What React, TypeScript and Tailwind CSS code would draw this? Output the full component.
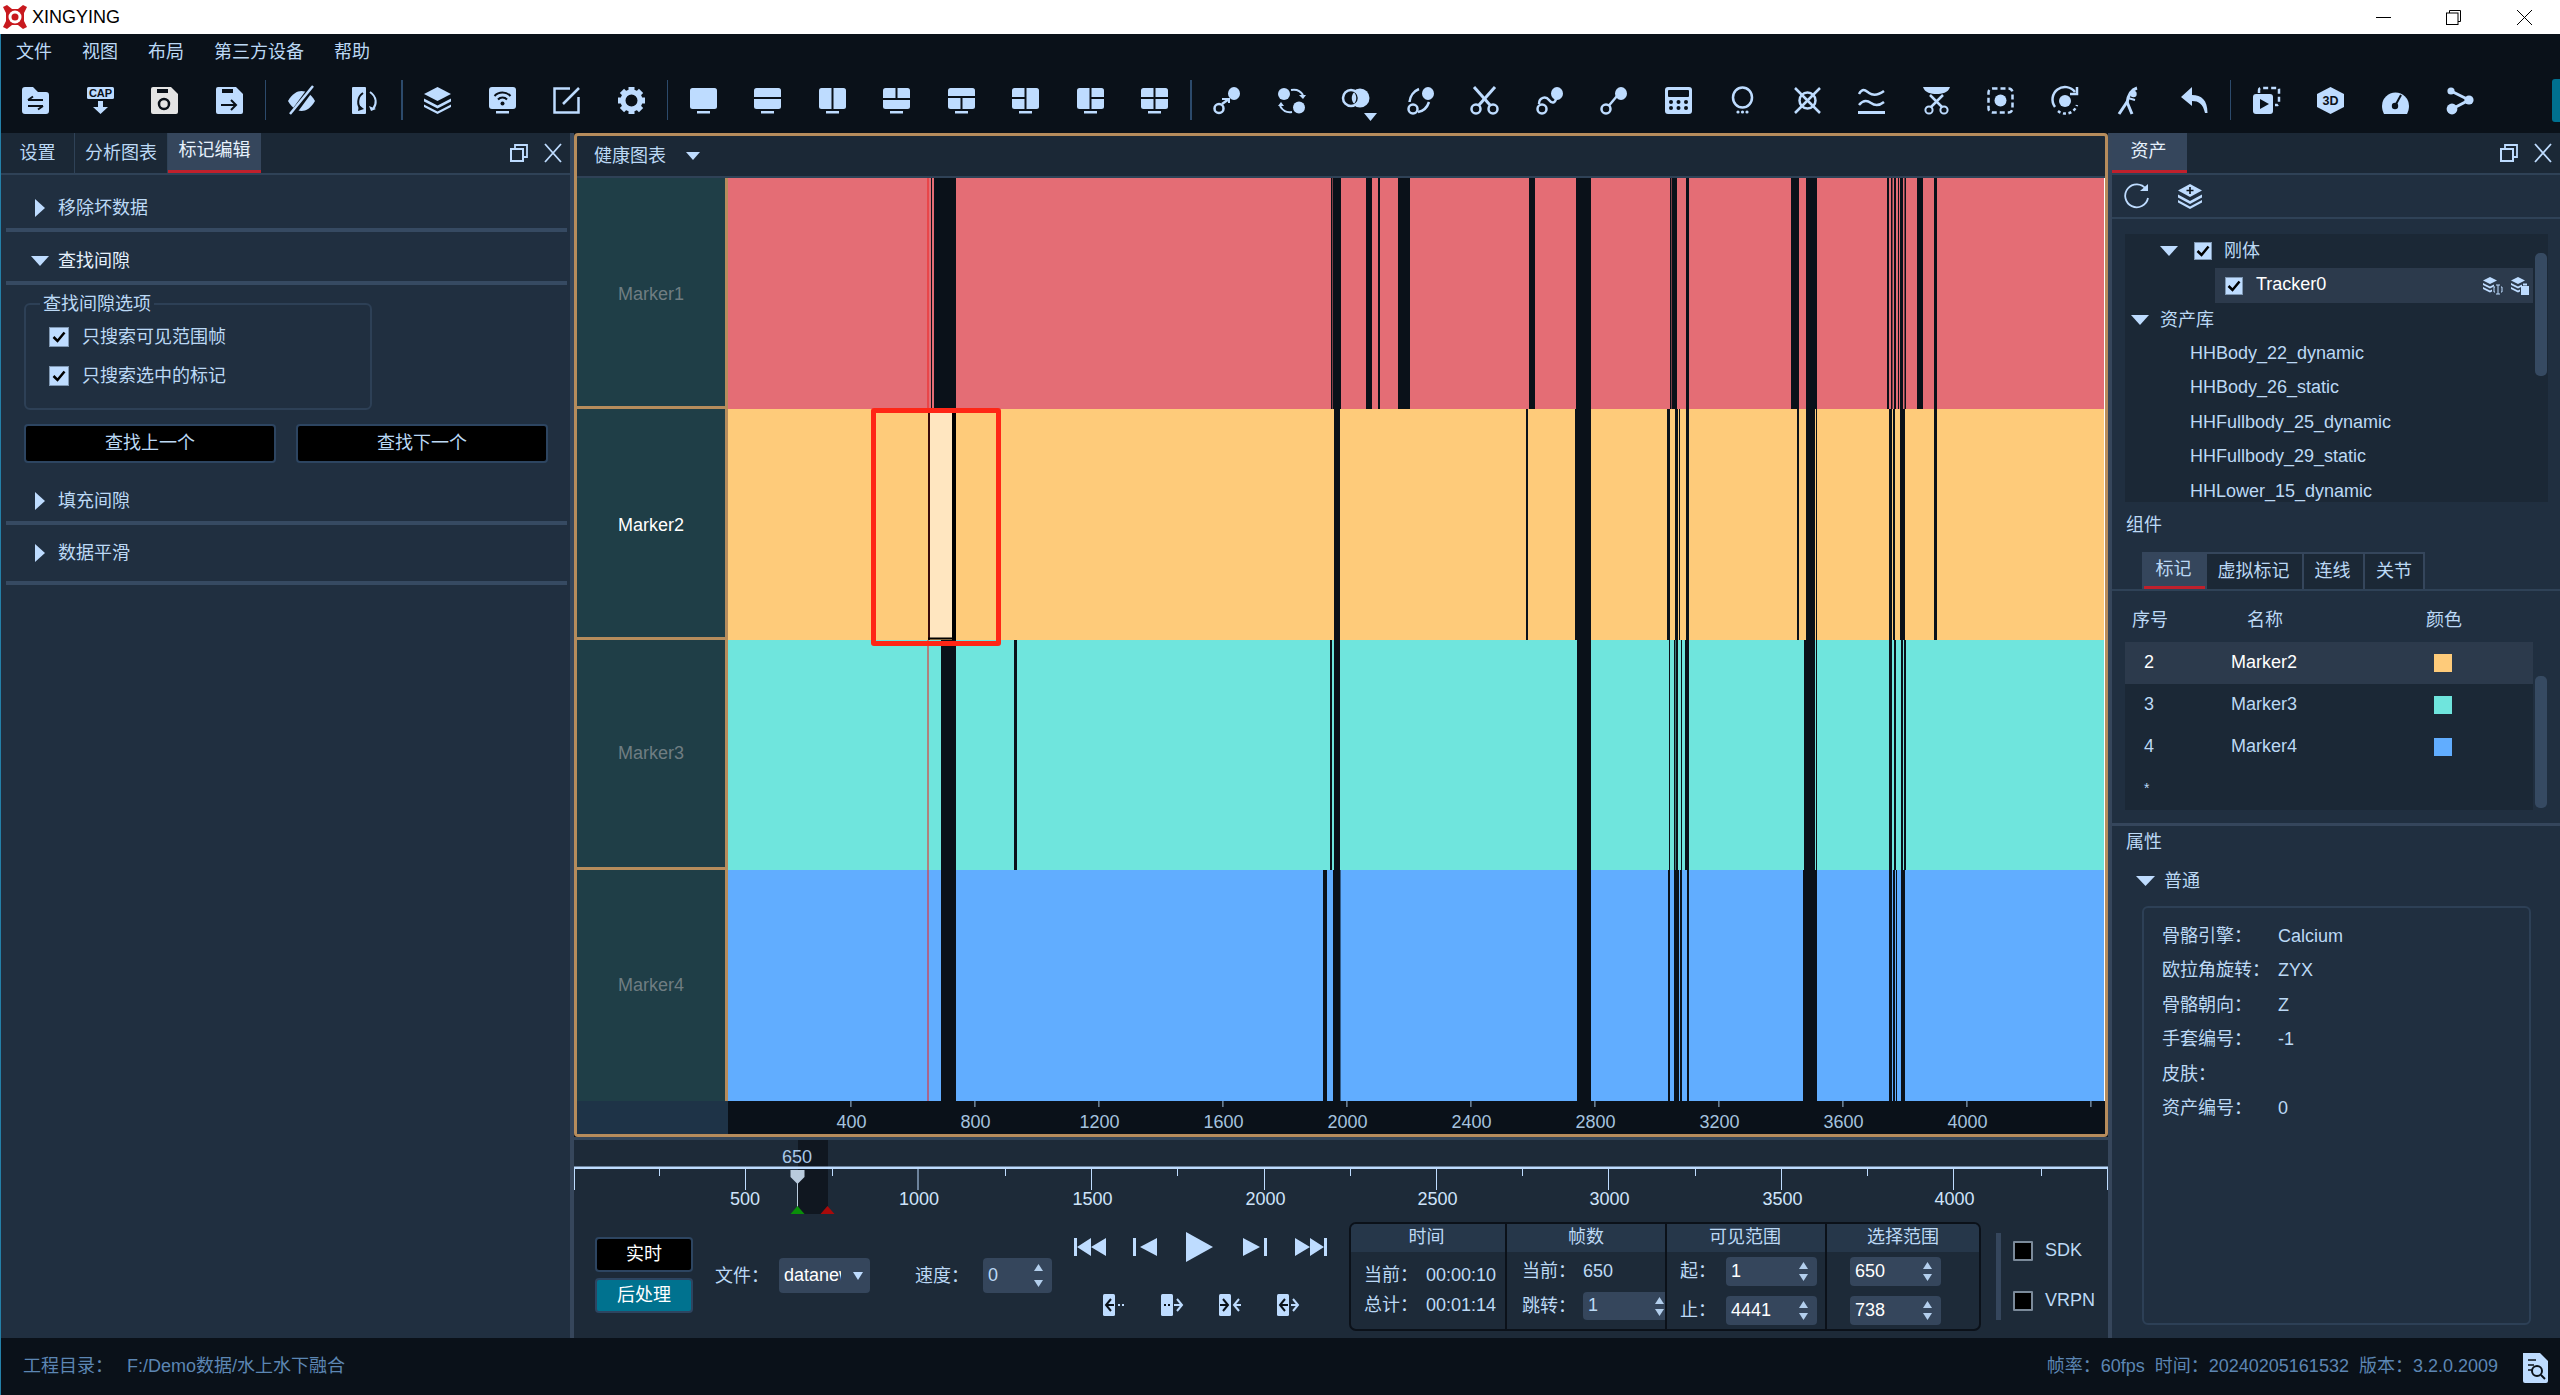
import React from 'react';

const L = '#bedcff';
const D = '#0a1119';

type SP = { w?: number; h?: number; vb?: string; children: React.ReactNode; className?: string };
const Svg = ({ w = 27, h = 27, vb, children, className = '' }: SP) => (
  <svg width={w} height={h} viewBox={vb || `0 0 ${w} ${h}`} className={`block shrink-0 overflow-visible ${className}`}>
    {children}
  </svg>
);
const Ln = ({ d, c = L, s = 2.5, dash, cap = 'butt' }: { d: string; c?: string; s?: number; dash?: string; cap?: 'butt' | 'round' }) => (
  <path d={d} fill="none" stroke={c} strokeWidth={s} strokeDasharray={dash} strokeLinecap={cap} />
);
const Ring = ({ x, y, r = 4.5, s = 2.5 }: { x: number; y: number; r?: number; s?: number }) => (
  <circle cx={x} cy={y} r={r} fill="none" stroke={L} strokeWidth={s} />
);
const Blob = ({ x = 21, y = 6.5 }: { x?: number; y?: number }) => <ellipse cx={x} cy={y} rx={6} ry={6.5} fill={L} />;

const Screen = ({ lines = [] as string[] }) => (
  <Svg>
    <rect x={0} y={1} width={27} height={21} rx={2.5} fill={L} />
    <rect x={7} y={24} width={13} height={2.5} fill={L} />
    {lines.map((d, i) => (
      <Ln key={i} d={d} c={D} s={2} />
    ))}
  </Svg>
);

const floppy = 'M2 0h18l7 7v18a2 2 0 0 1-2 2H2a2 2 0 0 1-2-2V2a2 2 0 0 1 2-2z';

const gear = (
  <Svg>
    {[0, 45, 90, 135, 180, 225, 270, 315].map((a) => (
      <rect key={a} x={10.5} y={0} width={6} height={6} fill={L} transform={`rotate(${a} 13.5 13.5)`} />
    ))}
    <circle cx={13.5} cy={13.5} r={8.5} fill="none" stroke={L} strokeWidth={5} />
  </Svg>
);

const toolbar: (React.ReactNode | 'sep')[] = [
  <Svg>
    <path fill={L} d="M3 0h8l5 5h8a3 3 0 0 1 3 3v16a3 3 0 0 1-3 3H3a3 3 0 0 1-3-3V3a3 3 0 0 1 3-3z" />
    <Ln d="M6 13h15M6 13l5-3.5" c={D} s={2} />
    <Ln d="M21 19H6M21 19l-5 3.5" c={D} s={2} />
  </Svg>,
  <Svg>
    <rect x={0} y={0} width={27} height={12} rx={1.5} fill={L} />
    <text x={13.5} y={10} textAnchor="middle" fontSize={11} fontWeight={700} fill={D}>CAP</text>
    <path fill={L} d="M11 14h5v6h5l-7.5 7-7.5-7h5z" />
  </Svg>,
  <Svg>
    <path fill="#e4e4e4" d={floppy} />
    <rect x={6} y={2} width={11} height={4} fill={D} />
    <circle cx={13} cy={17} r={5} fill="none" stroke={D} strokeWidth={2.5} />
  </Svg>,
  <Svg>
    <path fill={L} d={floppy} />
    <rect x={6} y={2} width={11} height={4} fill={D} />
    <Ln d="M5 18h15M15 13l5 5-5 5" c={D} s={2} />
  </Svg>,
  'sep',
  <Svg>
    <path fill={L} d="M0 14C4 7 9 4 13.5 4S23 7 27 14C23 21 18 24 13.5 24S4 21 0 14z" />
    <Ln d="M3 29L25 -1" c={D} s={6} />
    <Ln d="M2 27L25 -1" s={2.5} />
  </Svg>,
  <Svg>
    <rect x={0} y={0} width={14} height={27} rx={1} fill={L} />
    <Ln d="M11 6C5 10 5 18 9 22" c={D} s={2} />
    <path fill={D} d="M7 18l5 4-6 2z" />
    <Ln d="M18 5C25 10 25 17 21 22" s={2} />
    <path fill={L} d="M17 19l2 5 5-2z" />
  </Svg>,
  'sep',
  <Svg>
    <path fill={L} d="M13.5 0L27 7 13.5 14 0 7z" />
    <path fill={L} d="M0 11.5l13.5 7 13.5-7v3l-13.5 7-13.5-7z" />
    <path fill={L} d="M0 17.5l13.5 7 13.5-7v2.5l-13.5 7L0 20z" />
  </Svg>,
  <Svg>
    <rect x={0} y={0} width={27} height={22} rx={3} fill={L} />
    <rect x={7} y={24} width={13} height={2.5} fill={L} />
    <Ln d="M5.5 9a11 11 0 0 1 16 0" c={D} s={2} />
    <Ln d="M9 12.5a6 6 0 0 1 9 0" c={D} s={2} />
    <circle cx={13.5} cy={16.5} r={2} fill={D} />
  </Svg>,
  <Svg>
    <Ln d="M17 1.5H1.5v24h24V10" />
    <Ln d="M26 1L10 17" />
  </Svg>,
  gear,
  'sep',
  <Screen />,
  <Screen lines={['M0 11h27']} />,
  <Screen lines={['M13.5 1v21']} />,
  <Screen lines={['M0 12h27', 'M13.5 1v11']} />,
  <Screen lines={['M0 10h27', 'M13.5 10v12']} />,
  <Screen lines={['M13.5 1v21', 'M0 11h13.5']} />,
  <Screen lines={['M13.5 1v21', 'M13.5 11H27']} />,
  <Screen lines={['M13.5 1v21', 'M0 11h27']} />,
  'sep',
  <Svg>
    <Ring x={6} y={21.5} />
    <Blob />
    <Ln d="M9 17l7-5" />
    <Ln d="M9 12h7v4" s={2} />
  </Svg>,
  <Svg>
    <circle cx={6} cy={7} r={6} fill={L} />
    <circle cx={21} cy={20.5} r={6} fill={L} />
    <Ln d="M13 3c5-1 9 0 12 5" s={2} />
    <path fill={L} d="M21 8h7l-3 4z" />
    <Ln d="M14 25c-6 1-9-1-12-6" s={2} />
    <path fill={L} d="M0 19h6l-3-4z" />
  </Svg>,
  <Svg>
    <circle cx={18} cy={11} r={9.5} fill={L} />
    <circle cx={9} cy={11} r={8} fill={D} stroke={L} strokeWidth={2.5} />
    <path d="M12 5.500C15 8 15 14 12 16.500C9 14 9 8 12 5.500z" fill={L} />
    <path d="M22 26h13l-6.500 8z" fill={L} />
  </Svg>,
  <Svg>
    <Ring x={6} y={22} />
    <Blob />
    <Ln d="M2.5 15C3 9 7 4 12 2" />
    <Ln d="M11 25c6-1 9-4 11-10" />
  </Svg>,
  <Svg>
    <Ring x={5} y={22} />
    <Ring x={22} y={22} />
    <Ln d="M8 18L24 0" s={3} />
    <Ln d="M19 18L3 0" s={3} />
  </Svg>,
  <Svg>
    <Ring x={6} y={22} />
    <Blob />
    <Ln d="M3 17C3 10 10 9 13 13s6 3 7-1" />
  </Svg>,
  <Svg>
    <Ring x={6} y={22} />
    <Blob />
    <Ln d="M9 18.5L17 9" />
  </Svg>,
  <Svg>
    <rect x={0} y={0} width={27} height={27} rx={3} fill={L} />
    <rect x={3} y={3} width={21} height={7} rx={1} fill={D} />
    {[6, 13.5, 21].map((x) =>
      [15, 21].map((y) => <circle key={`${x}${y}`} cx={x} cy={y} r={2} fill={D} />),
    )}
  </Svg>,
  <Svg>
    <ellipse cx={13.5} cy={10.5} rx={9.5} ry={10} fill="none" stroke={L} strokeWidth={2.5} />
    {[9, 13.5, 18].map((x) => (
      <circle key={x} cx={x} cy={25} r={1.6} fill={L} />
    ))}
  </Svg>,
  <Svg>
    <Ln d="M1 1l25 25M26 1L1 26" />
    <circle cx={13.5} cy={13.5} r={8} fill="none" stroke={L} strokeWidth={2.5} />
  </Svg>,
  <Svg>
    <Ln d="M1 7c4-7 7-3 10-1s8 3 15-2" />
    <Ln d="M1 18c4-5 8-5 12-2s8 3 13-1" />
    <Ln d="M0 25.5h27" s={3} />
  </Svg>,
  <Svg>
    <path fill={L} d="M0 0h27c-2 6-8 7-13.5 7S2 6 0 0z" />
    <Ln d="M7 8l12 12M20 8L8 20" />
    <Ring x={6} y={23} r={3.6} s={2} />
    <Ring x={21} y={23} r={3.6} s={2} />
  </Svg>,
  <Svg>
    <rect x={1.5} y={1.5} width={24} height={24} rx={4} fill="none" stroke={L} strokeWidth={2.5} strokeDasharray="5 3" />
    <circle cx={13.5} cy={13.5} r={6} fill={L} />
  </Svg>,
  <Svg>
    <Ln d="M3 20A12 12 0 0 1 23 5" />
    <Ln d="M25 0v7h-7" />
    <Ln d="M6 24a12 12 0 0 0 19-6" dash="3 2.5" />
    <circle cx={13} cy={14} r={6} fill={L} />
  </Svg>,
  <Svg>
    <circle cx={17.500} cy={7} r={3.200} fill={L} />
    <Ln d="M11 15L3 27" s={3} />
    <Ln d="M11 15L16 27" s={3} />
    <Ln d="M11 16C12 9 14 3 21 1" s={3} />
    <Ln d="M12 11L19 13" s={2} />
  </Svg>,
  <Svg>
    <path fill={L} d="M11 0L0 10l11 9v-5c7 0 11 3 13 12h2.5c0-13-6-18-15.500-18z" />
  </Svg>,
  'sep',
  <Svg>
    <Ln d="M6 6V3a2 2 0 0 1 2-2h17a1 1 0 0 1 1 1v14a2 2 0 0 1-2 2h-2" s={2.5} dash="5 3" />
    <rect x={0} y={7} width={20} height={20} rx={3} fill={L} />
    <path fill={D} d="M7 12l9 5-9 5z" />
  </Svg>,
  <Svg>
    <path fill={L} d="M13.5 0L27 7v13l-13.5 7L0 20V7z" />
    <text x={13.5} y={18} textAnchor="middle" fontSize={12.500} fontWeight={700} fill={D}>3D</text>
  </Svg>,
  <Svg>
    <path fill={L} d="M0 19A13.500 13.500 0 0 1 27 19c0 3-1 6-2 8H2c-1-2-2-5-2-8z" />
    <Ln d="M13.5 18L19 8" c={D} s={2} />
    <circle cx={13} cy={19} r={3.2} fill={D} />
  </Svg>,
  <Svg>
    <Ln d="M5 4L23 13L6 22" s={3} />
    <circle cx={5} cy={4} r={3.6} fill={L} />
    <circle cx={23} cy={13} r={4.6} fill={L} />
    <circle cx={6} cy={22} r={5.4} fill={L} />
  </Svg>,
];

const TriR = () => (
  <svg width={10} height={18} className="block shrink-0"><path d="M0 0l10 9-10 9z" fill={L} /></svg>
);
const TriD = ({ w = 18, h = 10 }: { w?: number; h?: number }) => (
  <svg width={w} height={h} className="block shrink-0"><path d={`M0 0h${w}l-${w / 2} ${h}z`} fill={L} /></svg>
);
const SpinArrows = ({ gap = 5 }: { gap?: number }) => (
  <div className="flex flex-col items-center" style={{ gap }}>
    <svg width={9} height={7} className="block"><path d="M0 7l4.500-7 4.500 7z" fill="#b3cfed" /></svg>
    <svg width={9} height={7} className="block"><path d="M0 0h9l-4.500 7z" fill="#b3cfed" /></svg>
  </div>
);
const FloatClose = () => (
  <div className="ml-auto flex items-center">
    <Svg w={18} h={18}>
      <Ln d="M5 4V1h12v12h-4" s={1.8} />
      <rect x={1} y={5} width={12} height={12} fill="none" stroke={L} strokeWidth={2} />
    </Svg>
    <Svg w={18} h={18} className="ml-[16px] mr-[8px]">
      <Ln d="M1 0l16 18M17 0L1 18" s={1.8} />
    </Svg>
  </div>
);
const Check = ({ size = 20 }: { size?: number }) => (
  <div className="flex shrink-0 items-center justify-center border border-[#7f97b2] bg-[#bedcff]" style={{ width: size, height: size }}>
    <svg width={14} height={12}><path d="M1.500 6l4 4 7-8.500" fill="none" stroke="#000" strokeWidth={2.500} /></svg>
  </div>
);

const Section = ({ title, open, active, extra }: { title: string; open?: boolean; active?: boolean; extra?: boolean }) => (
  <>
    <div className={`flex h-[49px] items-end ${extra ? 'pb-[10px]' : 'pb-[9px]'} pl-[30px] text-[18px] leading-[22px]`}>
      <div className="flex h-[22px] w-[18px] items-center justify-center">{open ? <TriD /> : <TriR />}</div>
      <span className={`ml-[9px] ${active ? 'text-[#e6f1fc]' : ''}`}>{title}</span>
    </div>
    {extra && <div className="h-[7px]" />}
    <div className="ml-[5px] mr-[3px] h-[4px] bg-[#364a62]" />
  </>
);

const Spin = ({ value, w, h = 29, gap = 5, white = true }: { value: string; w: number; h?: number; gap?: number; white?: boolean }) => (
  <div className="flex shrink-0 items-center justify-between rounded-[4px] bg-[#35465c] pl-[5px] pr-[9px]" style={{ width: w, height: h }}>
    <span className={`pb-[2px] text-[18px] ${white ? 'text-white' : ''}`}>{value}</span>
    <SpinArrows gap={gap} />
  </div>
);

const STRIPES: number[][][] = [
  [[931, 932], [934, 956], [1331, 1332.500], [1333, 1341], [1366, 1372], [1378, 1380], [1398, 1410], [1529, 1535], [1576, 1591], [1670, 1671.500], [1672, 1677], [1686, 1689], [1791, 1799], [1806, 1817], [1887, 1889], [1891, 1892.500], [1894, 1896], [1898, 1899], [1900, 1903], [1904.500, 1906], [1917, 1923], [1934, 1937]],
  [[952, 956], [1334, 1340], [1526, 1528], [1575, 1591], [1667, 1670], [1675, 1678], [1679, 1680], [1686, 1689], [1797, 1799], [1806, 1815], [1816, 1817], [1889, 1892], [1893, 1895], [1900, 1905], [1934, 1937]],
  [[941, 956], [1014, 1017], [1330, 1332], [1334, 1340], [1577, 1591], [1669, 1670], [1674, 1675.500], [1676, 1678], [1681, 1682], [1685, 1689], [1804, 1815], [1816, 1817], [1889, 1892], [1894, 1896], [1901, 1903], [1904, 1906]],
  [[941, 956], [1323, 1327], [1333, 1340], [1340.500, 1341], [1577, 1591], [1668, 1670], [1674, 1679], [1680, 1682], [1687, 1689], [1803, 1817], [1889, 1892], [1893, 1895], [1896, 1897], [1901, 1905]],
];

const ROWS = [
  { name: 'Marker1', h: 231, color: '#e46d75' },
  { name: 'Marker2', h: 231, color: '#fecb7a' },
  { name: 'Marker3', h: 230, color: '#6fe5dd' },
  { name: 'Marker4', h: 231, color: '#61adff' },
];

const ChartRow = ({ i }: { i: number }) => {
  const r = ROWS[i];
  return (
    <div className="flex" style={{ height: r.h }}>
      <div className={`flex w-[151px] shrink-0 items-center justify-center border-r-[3px] border-[#b68c5c] bg-[#1f3e47] text-[18px] ${i < 3 ? 'border-b-[3px]' : ''} ${i < 2 ? 'pt-[4px]' : ''} ${i === 1 ? 'text-white' : 'text-[#6f7d82]'}`}>
        {r.name}
      </div>
      <svg width={1376} height={r.h} className="block shrink-0">
        <rect x={0} y={0} width={1376} height={r.h} fill={r.color} />
        {STRIPES[i].map(([a, b], k) => (
          <rect key={k} x={a - 728} y={0} width={b - a} height={r.h} fill={i === 1 && k === 0 ? '#000' : '#0a1119'} />
        ))}
        {i === 1 ? (
          <>
            <rect x={200} y={0} width={2} height={231} fill="#3a0a0a" />
            <rect x={202} y={3} width={22} height={226} fill="#ffe6c0" />
            <rect x={202} y={0} width={22} height={3} fill="#000" />
            <rect x={200} y={228.500} width={26} height={2} fill="#000" />
          </>
        ) : (
          <rect x={199.500} y={0} width={1} height={r.h} fill="#ee2020" />
        )}
      </svg>
      <div className="w-px bg-white" />
    </div>
  );
};

const fx = (f: number) => 851.4 + (f - 400) * 0.31 - 728;
const AXIS = [400, 800, 1200, 1600, 2000, 2400, 2800, 3200, 3600, 4000, 4400];

const Axis = () => (
  <div className="flex h-[33px]">
    <div className="w-[151px] bg-[#1e3347]" />
    <svg width={1377} height={33} className="block bg-[#0a1119]">
      {AXIS.map((f) => (
        <g key={f}>
          <rect x={fx(f) - 1} y={0} width={1} height={6} fill="#a5c3df" />
          {f < 4400 && (
            <text x={fx(f)} y={27} textAnchor="middle" fontSize={18} fill="#a5c3df">{f}</text>
          )}
        </g>
      ))}
    </svg>
  </div>
);

const RULER_BIG: [number, string][] = [[574, ''], [745, '500'], [917.500, '1000'], [1091, '1500'], [1264, '2000'], [1436, '2500'], [1608, '3000'], [1781, '3500'], [1953, '4000'], [2107, '']];
const RULER_SMALL = [659, 832, 1005, 1177, 1350, 1522, 1695, 1867, 2041];

const Ruler = () => (
  <svg width={1534} height={76} className="block">
    <rect x={224} y={0} width={30} height={74} fill="#101720" />
    <text x={223} y={23} textAnchor="middle" fontSize={18} fill="#a9c8e8">650</text>
    <rect x={0} y={26.500} width={1534} height={2.500} fill={L} />
    {RULER_BIG.map(([x, t]) => (
      <g key={x}>
        <rect x={x - 574} y={29} width={1} height={21} fill={L} />
        {t && <text x={x - 574 + (t === '500' ? 0 : 1.5)} y={65} textAnchor="middle" fontSize={18} fill="#cfe4fb">{t}</text>}
      </g>
    ))}
    {RULER_SMALL.map((x) => (
      <rect key={x} x={x - 574} y={29} width={1} height={7} fill={L} />
    ))}
    <rect x={223} y={40} width={1} height={34} fill="#b9cbdd" />
    <path d="M216.500 30h14v7l-7 7-7-7z" fill="#b9cbdd" />
    <path d="M216.500 74l7-8 7 8z" fill="#0a8f0a" />
    <path d="M246.500 74l7-8 7 8z" fill="#a80a0a" />
  </svg>
);

const FirstI = () => (
  <Svg w={32} h={18}><rect x={0} y={0} width={3} height={18} fill={L} /><path d="M3 9l14-9v18zM17 9l15-9v18z" fill={L} /></Svg>
);
const PrevI = () => (
  <Svg w={24} h={18}><rect x={0} y={0} width={3} height={18} fill={L} /><path d="M7 9l17-9v18z" fill={L} /></Svg>
);
const NextI = () => (
  <Svg w={24} h={18}><rect x={21} y={0} width={3} height={18} fill={L} /><path d="M17 9L0 0v18z" fill={L} /></Svg>
);
const LastI = () => (
  <Svg w={32} h={18}><rect x={29} y={0} width={3} height={18} fill={L} /><path d="M29 9L15 0v18zM15 9L0 0v18z" fill={L} /></Svg>
);

const Mini = ({ n }: { n: number }) => (
  <Svg w={22} h={22}>
    <rect x={0} y={0} width={12} height={22} rx={1.500} fill={L} />
    {n === 0 && (<><Ln d="M8 5L3 11l5 6M3 11h8" c={D} s={2} /><rect x={15} y={10} width={2} height={2} fill={L} /><rect x={19} y={10} width={2} height={2} fill={L} /></>)}
    {n === 1 && (<><rect x={3} y={10} width={2} height={2} fill={D} /><rect x={7} y={10} width={2} height={2} fill={D} /><Ln d="M16 5l5 6-5 6M13 11h8" s={2} /></>)}
    {n === 2 && (<><Ln d="M4 5l5 6-5 6M1 11h8" c={D} s={2} /><Ln d="M20 5l-5 6 5 6M15 11h7" s={2} /></>)}
    {n === 3 && (<><Ln d="M8 5L3 11l5 6M3 11h8" c={D} s={2} /><Ln d="M16 5l5 6-5 6M14 11h7" s={2} /></>)}
  </Svg>
);

const Table = () => (
  <div className="ml-[21px] mt-[6px] flex h-[109px] w-[632px] shrink-0 overflow-hidden rounded-[7px] border-2 border-[#0b1119] text-[18px] leading-[22px]">
    <div className="flex w-[156px] shrink-0 flex-col border-r-2 border-[#0b1119]">
      <div className="flex h-[28px] shrink-0 items-center justify-center bg-[#26374a] pb-[2px] pr-[3px]">时间</div>
      <div className="flex flex-col gap-[8px] overflow-hidden pl-[13px] pt-[12px]">
        <div className="flex"><span className="w-[62px] shrink-0">当前：</span><span className="whitespace-nowrap">00:00:10</span></div>
        <div className="flex"><span className="w-[62px] shrink-0">总计：</span><span className="whitespace-nowrap">00:01:14</span></div>
      </div>
    </div>
    <div className="flex w-[160px] shrink-0 flex-col overflow-hidden border-r-2 border-[#0b1119]">
      <div className="flex h-[28px] shrink-0 items-center justify-center bg-[#26374a] pb-[2px]">帧数</div>
      <div className="flex flex-col gap-[10px] pl-[15px] pt-[8px]">
        <div className="flex"><span className="w-[61px] shrink-0">当前：</span><span>650</span></div>
        <div className="flex items-center"><span className="w-[61px] shrink-0">跳转：</span><Spin value="1" w={90} h={28} white={false} /></div>
      </div>
    </div>
    <div className="flex w-[160px] shrink-0 flex-col border-r-2 border-[#0b1119]">
      <div className="flex h-[28px] shrink-0 items-center justify-center bg-[#26374a] pb-[2px] pr-[2px]">可见范围</div>
      <div className="flex flex-col gap-[10px] pl-[13px] pt-[5px]">
        <div className="flex items-center"><span className="w-[46px] shrink-0 pb-[2px]">起：</span><Spin value="1" w={91} /></div>
        <div className="flex items-center"><span className="w-[46px] shrink-0 pb-[2px]">止：</span><Spin value="4441" w={91} /></div>
      </div>
    </div>
    <div className="flex flex-1 flex-col">
      <div className="flex h-[28px] shrink-0 items-center justify-center bg-[#26374a] pb-[2px]">选择范围</div>
      <div className="flex flex-col gap-[10px] pl-[23px] pt-[5px]">
        <Spin value="650" w={91} />
        <Spin value="738" w={91} />
      </div>
    </div>
  </div>
);

const Timeline = () => (
  <div className="h-[198px] bg-[#1d2a38] text-[18px] leading-[22px]">
    <Ruler />
    <div className="flex h-[122px] items-start">
      <div className="ml-[21px] mt-[21px] flex w-[98px] shrink-0 flex-col gap-[6px]">
        <div className="flex h-[35px] items-center justify-center rounded-[4px] border-2 border-[#2d4561] bg-black pb-[2px] text-white">实时</div>
        <div className="flex h-[35px] items-center justify-center rounded-[4px] border-2 border-[#2d4561] bg-[#00728f] pb-[1px] text-white">后处理</div>
      </div>
      <span className="ml-[22px] mt-[49px] w-[64px] shrink-0">文件：</span>
      <div className="mt-[42px] flex h-[35px] w-[91px] shrink-0 items-center rounded-[4px] bg-[#35465c] pl-[5px]">
        <span className="w-[57px] overflow-hidden whitespace-nowrap pb-[1px] text-white">datanew</span>
        <div className="ml-[12px]"><TriD w={10} h={8} /></div>
      </div>
      <span className="ml-[45px] mt-[49px] w-[68px] shrink-0">速度：</span>
      <div className="mt-[42px]">
        <Spin value="0" w={69} h={35} gap={9} white={false} />
      </div>
      <div className="ml-[22px] w-[254px] shrink-0">
        <div className="mt-[22px] flex h-[18px] items-center">
          <FirstI />
          <div className="ml-[27px]"><PrevI /></div>
          <div className="ml-[29px] -my-[6px]"><Svg w={27} h={30}><path d="M0 0l27 15L0 30z" fill={L} /></Svg></div>
          <div className="ml-[30px]"><NextI /></div>
          <div className="ml-[28px]"><LastI /></div>
        </div>
        <div className="ml-[29px] mt-[38px] flex gap-[36px]">
          <Mini n={0} />
          <Mini n={1} />
          <Mini n={2} />
          <Mini n={3} />
        </div>
      </div>
      <Table />
      <div className="ml-[15px] mt-[17px] h-[87px] w-[5px] shrink-0 bg-[#35465c]" />
      <div className="ml-[12px] mt-[25px] flex flex-col gap-[30px]">
        {['SDK', 'VRPN'].map((t) => (
          <div key={t} className="flex h-[20px] items-center gap-[12px]">
            <div className="h-[20px] w-[20px] shrink-0 rounded-[1px] border-2 border-[#7b8a9a] bg-black" />
            <span className="pb-[2px]">{t}</span>
          </div>
        ))}
      </div>
    </div>
  </div>
);

const LeftPanel = () => (
  <div className="w-[569px] shrink-0 bg-[#202f40]">
    <div className="flex h-[40px] items-center bg-[#1b2836] text-[18px]">
      <div className="flex h-full w-[74px] items-center justify-center border-r border-[#2f4257]">设置</div>
      <div className="flex h-full w-[93px] items-center justify-center border-r border-[#2f4257]">分析图表</div>
      <div className="flex h-full w-[93px] items-center justify-center border-b-[3px] border-[#c0202c] bg-[#35465c] pb-[2px] text-[#e6f1fc]">标记编辑</div>
      <FloatClose />
    </div>
    <div className="h-[2px] bg-[#2f4257]" />
    <div className="h-[4px]" />
    <Section title="移除坏数据" />
    <Section title="查找间隙" open active />
    <div className="relative ml-[23px] mt-[18px] h-[107px] w-[348px] rounded-[6px] border-2 border-[#2d4056] pl-[23px] pt-[22px] text-[18px] leading-[20px]">
      <span className="absolute -top-[12px] left-[14px] bg-[#202f40] px-[3px] leading-[22px]">查找间隙选项</span>
      <div className="flex flex-col gap-[19px]">
        <div className="flex items-center gap-[13px]"><Check />只搜索可见范围帧</div>
        <div className="flex items-center gap-[13px]"><Check />只搜索选中的标记</div>
      </div>
    </div>
    <div className="ml-[23px] mt-[14px] flex gap-[20px] text-[18px]">
      <div className="flex h-[39px] w-[252px] items-center justify-center rounded-[4px] border-2 border-[#2d4561] bg-black">查找上一个</div>
      <div className="flex h-[39px] w-[252px] items-center justify-center rounded-[4px] border-2 border-[#2d4561] bg-black">查找下一个</div>
    </div>
    <div className="h-[9px]" />
    <Section title="填充间隙" />
    <Section title="数据平滑" extra />
  </div>
);

const ASSETS = ['HHBody_22_dynamic', 'HHBody_26_static', 'HHFullbody_25_dynamic', 'HHFullbody_29_static', 'HHLower_15_dynamic'];
const MARKERS = [
  ['2', 'Marker2', '#fecb7a'],
  ['3', 'Marker3', '#6fe5dd'],
  ['4', 'Marker4', '#61adff'],
];
const PROPS = [
  ['骨骼引擎：', 'Calcium'],
  ['欧拉角旋转：', 'ZYX'],
  ['骨骼朝向：', 'Z'],
  ['手套编号：', '-1'],
  ['皮肤：', ''],
  ['资产编号：', '0'],
];

const SmallLayers = () => (
  <>
    <path fill={L} d="M7 0l7 3.500-7 3.500-7-3.500z" />
    <path fill={L} d="M0 6l7 3.500L11 7.500v2L7 11.500 0 8zM0 10l7 3.500 2-1v2l-2 1-7-3.500z" />
  </>
);

const RightPanel = () => (
  <div className="w-[448px] shrink-0 bg-[#202f40] text-[18px] leading-[22px]">
    <div className="flex h-[40px] items-center bg-[#1b2836]">
      <div className="flex h-full w-[75px] items-center justify-center border-b-[3px] border-[#c0202c] bg-[#35465c] pb-[2px] pr-[2px] text-[#e6f1fc]">资产</div>
      <FloatClose />
    </div>
    <div className="h-[2px] bg-[#2f4257]" />
    <div className="flex h-[42px] items-center pl-[12px]">
      <Svg w={24} h={24}>
        <Ln d="M22 5A11.500 11.500 0 1 0 24 14" s={1.8} />
        <path fill={L} d="M16 7h8V0z" />
      </Svg>
      <div className="ml-[30px]">
        <Svg w={24} h={24}>
          <path fill={L} d="M12 0l12 6.500L12 13 0 6.500z" />
          <Ln d="M12 3v7M8.500 6.500h7" c={D} s={1.6} />
          <path fill={L} d="M0 10.500l12 6.500 12-6.500v3L12 20 0 13.500z" />
          <path fill={L} d="M0 16l12 6.500L24 16v2.500L12 25 0 18.500z" />
        </Svg>
      </div>
    </div>
    <div className="h-[2px] bg-[#2f4257]" />
    <div className="relative ml-[13px] mt-[15px] h-[268px] w-[423px] overflow-hidden bg-[#1b2836]">
      <div className="flex h-[34px] items-center pl-[35px]">
        <TriD w={18} h={10} />
        <div className="ml-[16px]"><Check size={18} /></div>
        <span className="ml-[12px]">刚体</span>
      </div>
      <div className="ml-[90px] flex h-[35px] w-[318px] items-center bg-[#2c3a4c] pl-[10px] text-white">
        <Check size={18} />
        <span className="ml-[13px] pb-[4px]">Tracker0</span>
        <div className="ml-auto mr-[4px] flex gap-[9px]">
          <Svg w={19} h={18}><SmallLayers /><Ln d="M15 8v9M13 8h4M13 17h4M12 10h-1v5h1M18 10h1v5h-1" s={1} /></Svg>
          <Svg w={18} h={18}><SmallLayers /><path fill={L} d="M10 9h8v9h-8zM12 6.500h4v2h-4z" /></Svg>
        </div>
      </div>
      <div className="flex h-[34px] items-center pl-[6px] pb-[1px]">
        <TriD w={18} h={10} />
        <span className="ml-[11px]">资产库</span>
      </div>
      {ASSETS.map((a) => (
        <div key={a} className="flex h-[34.500px] items-center pb-[3px] pl-[65px]">{a}</div>
      ))}
      <div className="absolute left-[410px] top-[19px] h-[123px] w-[12px] rounded-[5px] bg-[#364a62]" />
    </div>
    <div className="ml-[14px] mt-[12px]">组件</div>
    <div className="ml-[30px] mt-[16px] flex h-[37px] w-[283px] border-x-2 border-t-2 border-[#35465c] bg-[#1b2836]">
      <div className="flex w-[61px] items-center justify-center border-b-[3px] border-[#c0202c] bg-[#35465c] pb-[2px] pr-[2px]">标记</div>
      <div className="flex w-[97px] items-center justify-center border-l-2 border-[#35465c] pb-[2px] pr-[2px]">虚拟标记</div>
      <div className="flex w-[61px] items-center justify-center border-l-2 border-[#35465c] pb-[2px] pr-[2px]">连线</div>
      <div className="flex flex-1 items-center justify-center border-l-2 border-[#35465c] pb-[2px]">关节</div>
    </div>
    <div className="h-[2px] bg-[#2f4257]" />
    <div className="ml-[20px] mt-[18px] flex">
      <span className="w-[115px]">序号</span>
      <span className="w-[179px]">名称</span>
      <span>颜色</span>
    </div>
    <div className="relative ml-[13px] mt-[11px] w-[423px]">
      <div className="h-[168px] w-[408px] bg-[#1b2836]">
        {MARKERS.map(([n, name, c], i) => (
          <div key={n} className={`flex h-[42px] items-center ${i === 0 ? 'bg-[#2c3a4c] text-white' : ''}`}>
            <span className="ml-[19px] w-[87px] pb-[3px]">{n}</span>
            <span className="w-[203px] pb-[3px]">{name}</span>
            <div className="h-[18px] w-[18px]" style={{ backgroundColor: c }} />
          </div>
        ))}
        <div className="flex h-[42px] items-center pb-[3px] pl-[19px] text-[14px]">*</div>
      </div>
      <div className="absolute left-[410px] top-[34px] h-[132px] w-[12px] rounded-[5px] bg-[#364a62]" />
    </div>
    <div className="mt-[13px] h-[3px] bg-[#35465c]" />
    <div className="ml-[14px] mt-[5px]">属性</div>
    <div className="ml-[24px] mt-[17px] flex items-center">
      <TriD w={19} h={10} />
      <span className="ml-[9px]">普通</span>
    </div>
    <div className="ml-[30px] mt-[14px] flex h-[419px] w-[389px] flex-col gap-[12.400px] rounded-[6px] border-2 border-[#2d4056] pl-[18px] pt-[17px]">
      {PROPS.map(([k, v]) => (
        <div key={k} className="flex">
          <span className="w-[116px] shrink-0">{k}</span>
          <span>{v}</span>
        </div>
      ))}
    </div>
  </div>
);

export default function App() {
  return (
    <div className="flex h-[1395px] w-[2560px] flex-col overflow-hidden bg-[#0a1119] font-['Liberation_Sans','Noto_Sans_CJK_SC',sans-serif] text-[#bcd9f5]">
      <div className="flex h-[34px] shrink-0 items-center bg-white pl-[3px] text-[18px] text-black">
        <Svg w={24} h={24}>
          <path fill="#c8191e" d="M0 2L4 0l5 4h6l5-4 4 2-3 6v8l3 6-4 2-5-4H9l-5 4-4-2 3-6V8z" />
          <circle cx={12} cy={12} r={6.500} fill="#fff" />
          <circle cx={12} cy={12} r={3.500} fill="#c8191e" />
        </Svg>
        <span className="ml-[5px]">XINGYING</span>
        <div className="ml-auto flex items-center">
          <div className="h-px w-[15px] bg-black" />
          <div className="ml-[55px]">
            <Svg w={15} h={15}>
              <path d="M3.500 3V.5h11v11H12" fill="none" stroke="#000" />
              <rect x={.5} y={3} width={11.500} height={11.500} fill="none" stroke="#000" />
            </Svg>
          </div>
          <div className="ml-[56px] mr-[28px]">
            <Svg w={15} h={15}><path d="M0 0l15 15M15 0L0 15" fill="none" stroke="#000" /></Svg>
          </div>
        </div>
      </div>
      <div className="flex flex-1 flex-col overflow-hidden border-l border-[#2480a8]">
        <div className="flex h-[33px] shrink-0 items-center pt-[3px] text-[18px]">
          {['文件', '视图', '布局', '第三方设备', '帮助'].map((m) => (
            <span key={m} className="px-[15px]">{m}</span>
          ))}
        </div>
        <div className="flex h-[66px] shrink-0 items-center pl-[2.500px]">
          {toolbar.map((t, i) =>
            t === 'sep' ? (
              <div key={i} className="flex w-[7.500px] shrink-0 justify-center">
                <div className="h-[40px] w-[1.500px] bg-[#2c4a6b]" />
              </div>
            ) : (
              <div key={i} className="flex w-[64.500px] shrink-0 justify-center">{t}</div>
            ),
          )}
          <div className="ml-auto h-[43px] w-[8px] rounded-l-[3px] bg-[#00708f]" />
        </div>
        <div className="flex h-[1205px] shrink-0">
          <LeftPanel />
          <div className="w-[4px] shrink-0 bg-[#36465b]" />
          <div className="flex w-[1534px] shrink-0 flex-col">
            <div className="relative flex h-[1004px] flex-col rounded-[4px] border-[3px] border-[#b68c5c] bg-[#1b2836]">
              <div className="flex h-[40px] shrink-0 items-center pl-[17px] text-[18px]">
                健康图表
                <div className="ml-[20px]"><TriD w={14} h={8} /></div>
              </div>
              <div className="h-[2px] shrink-0 bg-[#2f4257]" />
              {ROWS.map((_, i) => (
                <ChartRow key={i} i={i} />
              ))}
              <Axis />
              <div className="absolute left-[294px] top-[272px] h-[238px] w-[130px] rounded-[3px] border-[5px] border-[#ff2616]" />
            </div>
            <div className="h-[3px] shrink-0 bg-[#34465a]" />
            <Timeline />
          </div>
          <div className="w-[4px] shrink-0 bg-[#36465b]" />
          <RightPanel />
        </div>
        <div className="flex h-[57px] shrink-0 items-center pl-[22px] text-[18px] text-[#5c86b3]">
          <span className="w-[104px]">工程目录：</span>
          <span>F:/Demo数据/水上水下融合</span>
          <span className="ml-auto">帧率：60fps</span>
          <span className="ml-[10px]">时间：20240205161532</span>
          <span className="ml-[10px]">版本：3.2.0.2009</span>
          <div className="ml-[25px] mr-[12px]">
            <Svg w={25} h={32}>
              <path fill={L} d="M0 2h17l8 8v20a2 2 0 0 1-2 2H2a2 2 0 0 1-2-2z" />
              <Ln d="M5 9h8M5 14h6M5 19h4" c={D} s={1.6} />
              <circle cx={14} cy={20} r={5} fill={L} stroke={D} strokeWidth={2} />
              <Ln d="M18 24l4 4" c={D} s={2} />
            </Svg>
          </div>
        </div>
      </div>
    </div>
  );
}
